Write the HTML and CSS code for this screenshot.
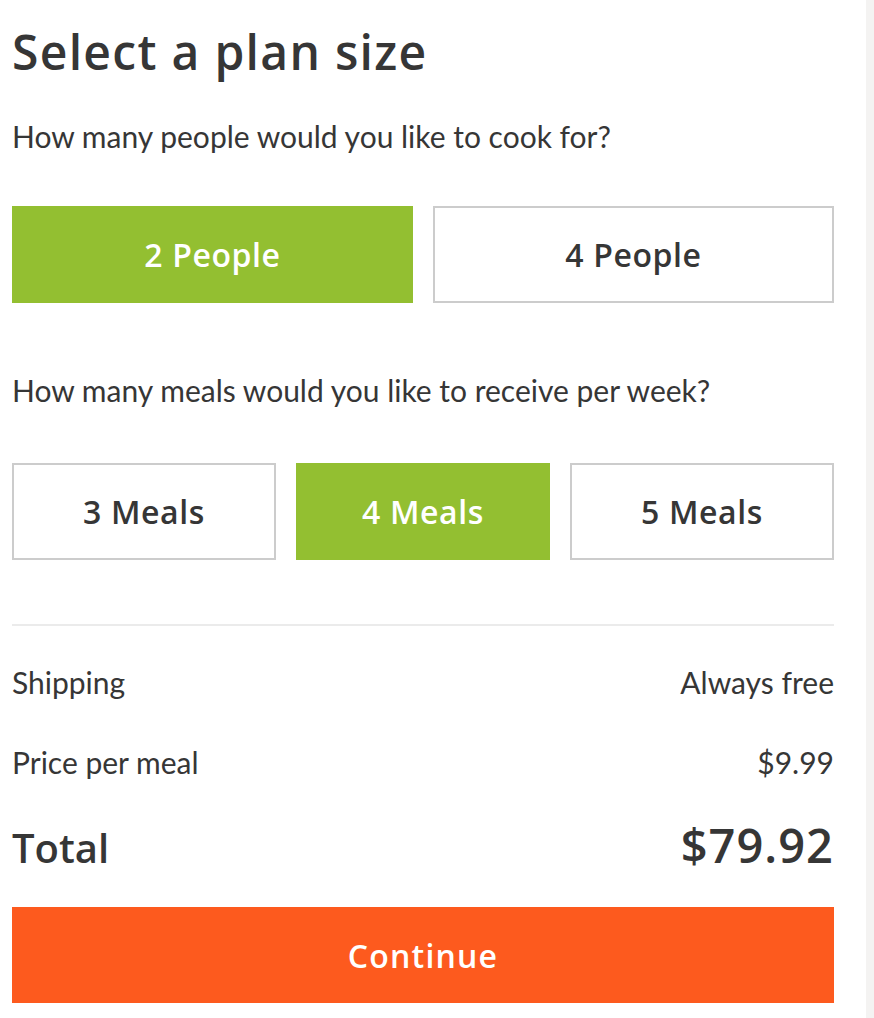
FILE: index.html
```html
<!DOCTYPE html>
<html lang="en">
<head>
    <meta charset="UTF-8">
    <title>Select a plan size</title>
    <link rel="stylesheet" href="styles.css">
</head>
<body>
    <div class="page">
        <h1>Select a plan size</h1>

        <p class="question">How many people would you like to cook for?</p>
        <div class="options two">
            <button class="option selected">2 People</button>
            <button class="option">4 People</button>
        </div>

        <p class="question meals">How many meals would you like to receive per week?</p>
        <div class="options three">
            <button class="option">3 Meals</button>
            <button class="option selected">4 Meals</button>
            <button class="option">5 Meals</button>
        </div>

        <div class="summary">
            <div class="row">
                <span>Shipping</span>
                <span>Always free</span>
            </div>
            <div class="row">
                <span>Price per meal</span>
                <span>$9.99</span>
            </div>
            <div class="row total">
                <span>Total</span>
                <span class="amount">$79.92</span>
            </div>
        </div>

        <button class="continue">Continue</button>
    </div>
</body>
</html>
```

FILE: styles.css
```css
html {
    background: #f4f3f2;
}
body {
    margin: 0;
    color: #363636;
    font-family: Lato, sans-serif;
}
.page {
    width: 866px;
    min-height: 1018px;
    box-sizing: border-box;
    padding: 0 32px 0 12px;
    background: white;
}
h1 {
    margin: 0;
    padding-top: 24px;
    font-family: 'Open Sans', sans-serif;
    font-weight: 600;
    font-size: 48px;
    line-height: 56px;
    letter-spacing: 1.3px;
}
.question {
    margin: 38px 0 0;
    font-size: 30px;
    line-height: 36px;
}
.question.meals {
    margin-top: 69px;
}
.options {
    display: grid;
    gap: 20px;
    margin-top: 52px;
}
.options.two {
    grid-template-columns: 1fr 1fr;
}
.options.three {
    grid-template-columns: 264px 254px 264px;
    margin-top: 55px;
}
.option {
    height: 97px;
    background: white;
    border: 2px solid #cccccc;
    color: #363636;
    font-family: 'Open Sans', sans-serif;
    font-weight: 600;
    font-size: 32px;
    letter-spacing: 0.6px;
    cursor: pointer;
}
.option.selected {
    background: #93bf31;
    border-color: #93bf31;
    color: white;
}
.summary {
    margin-top: 64px;
    border-top: 2px solid #ebebeb;
    padding-top: 34px;
}
.row {
    display: flex;
    justify-content: space-between;
    align-items: baseline;
    font-size: 30px;
    line-height: 44px;
    margin-bottom: 36px;
}
.row.total {
    font-family: 'Open Sans', sans-serif;
    font-weight: 600;
    font-size: 40px;
    line-height: 50px;
    margin-bottom: 34px;
}
.row.total .amount {
    font-size: 47px;
    letter-spacing: 1px;
}
.continue {
    display: block;
    width: 100%;
    height: 96px;
    background: #fd5a1e;
    color: white;
    border: none;
    font-family: 'Open Sans', sans-serif;
    font-weight: 600;
    font-size: 32px;
    letter-spacing: 1.2px;
    cursor: pointer;
}
```
